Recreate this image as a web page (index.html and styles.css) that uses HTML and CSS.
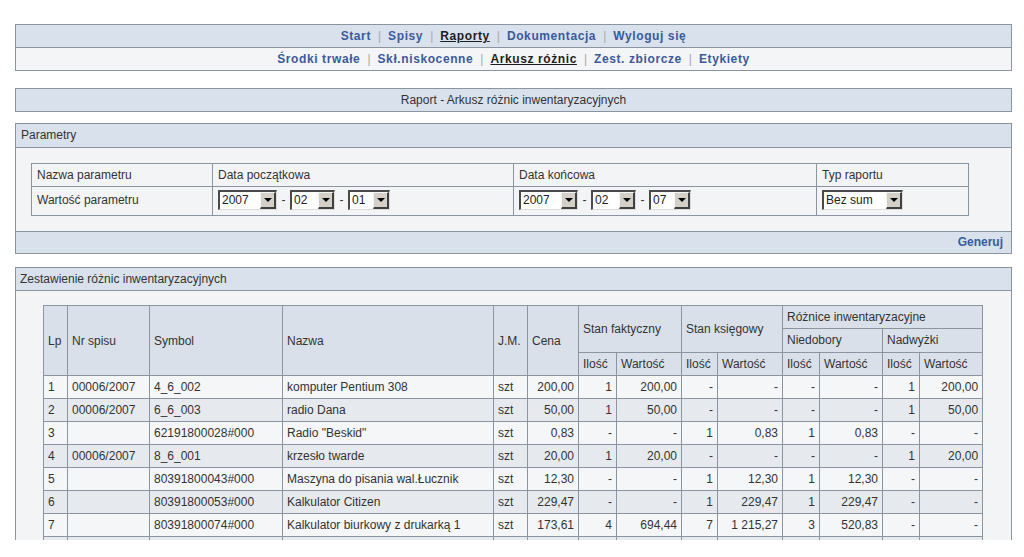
FILE: index.html
```html
<!DOCTYPE html>
<html lang="pl">
<head>
<meta charset="utf-8">
<title>Raport - Arkusz różnic inwentaryzacyjnych</title>
<link rel="stylesheet" href="styles.css">
</head>
<body>
<div class="page">
  <div class="nav">
    <div class="nav-row nav-main">
      <a class="nl" href="#">Start</a><span class="sep">|</span><a class="nl" href="#">Spisy</a><span class="sep">|</span><a class="nl active" href="#">Raporty</a><span class="sep">|</span><a class="nl" href="#">Dokumentacja</a><span class="sep">|</span><a class="nl" href="#">Wyloguj się</a>
    </div>
    <div class="nav-row nav-sub">
      <a class="nl" href="#">Środki trwałe</a><span class="sep">|</span><a class="nl" href="#">Skł.niskocenne</a><span class="sep">|</span><a class="nl active" href="#">Arkusz różnic</a><span class="sep">|</span><a class="nl" href="#">Zest. zbiorcze</a><span class="sep">|</span><a class="nl" href="#">Etykiety</a>
    </div>
  </div>

  <div class="titlebar">Raport - Arkusz różnic inwentaryzacyjnych</div>

  <div class="panel params">
    <div class="panel-head">Parametry</div>
    <div class="panel-body params-body">
      <table class="ptable">
        <colgroup><col class="pc1"><col class="pc2"><col class="pc3"><col class="pc4"></colgroup>
        <tr><td>Nazwa parametru</td><td>Data początkowa</td><td>Data końcowa</td><td>Typ raportu</td></tr>
        <tr class="prow">
          <td>Wartość parametru</td>
          <td><div class="dates"><span class="sel w-year"><span class="sv">2007</span><span class="sb"></span></span><span class="dash">-</span><span class="sel w-mon"><span class="sv">02</span><span class="sb"></span></span><span class="dash">-</span><span class="sel w-day"><span class="sv">01</span><span class="sb"></span></span></div></td>
          <td><div class="dates"><span class="sel w-year"><span class="sv">2007</span><span class="sb"></span></span><span class="dash">-</span><span class="sel w-mon"><span class="sv">02</span><span class="sb"></span></span><span class="dash">-</span><span class="sel w-day"><span class="sv">07</span><span class="sb"></span></span></div></td>
          <td><div class="dates"><span class="sel w-typ"><span class="sv">Bez sum</span><span class="sb"></span></span></div></td>
        </tr>
      </table>
    </div>
    <div class="panel-foot"><a class="nl" href="#">Generuj</a></div>
  </div>

  <div class="panel result">
    <div class="panel-head">Zestawienie różnic inwentaryzacyjnych</div>
    <div class="panel-body result-body">
      <table class="dtable">
        <colgroup>
          <col class="c-lp"><col class="c-nr"><col class="c-sym"><col class="c-naz"><col class="c-jm"><col class="c-cena">
          <col class="c-q1"><col class="c-v1"><col class="c-q2"><col class="c-v2"><col class="c-q3"><col class="c-v3"><col class="c-q4"><col class="c-v4">
        </colgroup>
        <thead>
          <tr>
            <th rowspan="3">Lp</th><th rowspan="3">Nr spisu</th><th rowspan="3">Symbol</th><th rowspan="3">Nazwa</th><th rowspan="3">J.M.</th><th rowspan="3">Cena</th>
            <th colspan="2" rowspan="2">Stan faktyczny</th><th colspan="2" rowspan="2">Stan księgowy</th><th colspan="4">Różnice inwentaryzacyjne</th>
          </tr>
          <tr class="h2"><th colspan="2">Niedobory</th><th colspan="2">Nadwyżki</th></tr>
          <tr><th>Ilość</th><th>Wartość</th><th>Ilość</th><th>Wartość</th><th>Ilość</th><th>Wartość</th><th>Ilość</th><th>Wartość</th></tr>
        </thead>
        <tbody>
          <tr><td>1</td><td>00006/2007</td><td>4_6_002</td><td>komputer Pentium 308</td><td>szt</td><td class="n">200,00</td><td class="n">1</td><td class="n">200,00</td><td class="n">-</td><td class="n">-</td><td class="n">-</td><td class="n">-</td><td class="n">1</td><td class="n">200,00</td></tr>
          <tr><td>2</td><td>00006/2007</td><td>6_6_003</td><td>radio Dana</td><td>szt</td><td class="n">50,00</td><td class="n">1</td><td class="n">50,00</td><td class="n">-</td><td class="n">-</td><td class="n">-</td><td class="n">-</td><td class="n">1</td><td class="n">50,00</td></tr>
          <tr><td>3</td><td></td><td>62191800028#000</td><td>Radio "Beskid"</td><td>szt</td><td class="n">0,83</td><td class="n">-</td><td class="n">-</td><td class="n">1</td><td class="n">0,83</td><td class="n">1</td><td class="n">0,83</td><td class="n">-</td><td class="n">-</td></tr>
          <tr><td>4</td><td>00006/2007</td><td>8_6_001</td><td>krzesło twarde</td><td>szt</td><td class="n">20,00</td><td class="n">1</td><td class="n">20,00</td><td class="n">-</td><td class="n">-</td><td class="n">-</td><td class="n">-</td><td class="n">1</td><td class="n">20,00</td></tr>
          <tr><td>5</td><td></td><td>80391800043#000</td><td>Maszyna do pisania wal.Łucznik</td><td>szt</td><td class="n">12,30</td><td class="n">-</td><td class="n">-</td><td class="n">1</td><td class="n">12,30</td><td class="n">1</td><td class="n">12,30</td><td class="n">-</td><td class="n">-</td></tr>
          <tr><td>6</td><td></td><td>80391800053#000</td><td>Kalkulator Citizen</td><td>szt</td><td class="n">229,47</td><td class="n">-</td><td class="n">-</td><td class="n">1</td><td class="n">229,47</td><td class="n">1</td><td class="n">229,47</td><td class="n">-</td><td class="n">-</td></tr>
          <tr><td>7</td><td></td><td>80391800074#000</td><td>Kalkulator biurkowy z drukarką 1</td><td>szt</td><td class="n">173,61</td><td class="n">4</td><td class="n">694,44</td><td class="n">7</td><td class="n">1 215,27</td><td class="n">3</td><td class="n">520,83</td><td class="n">-</td><td class="n">-</td></tr>
          <tr class="empty"><td></td><td></td><td></td><td></td><td></td><td></td><td></td><td></td><td></td><td></td><td></td><td></td><td></td><td></td></tr>
        </tbody>
      </table>
    </div>
  </div>
</div>
</body>
</html>
```

FILE: styles.css
```css
html, body {
  margin: 0;
  padding: 0;
  background: #ffffff;
}

body {
  font-family: "Liberation Sans", Arial, sans-serif;
  font-size: 12px;
  color: #333333;
}

.page {
  height: 540px;
  overflow: hidden;
  padding: 24px 12px 0 15px;
  box-sizing: border-box;
}

a { text-decoration: none; }

.nl {
  color: #3a5a9c;
  font-weight: bold;
}

.nav .nl {
  letter-spacing: 0.6px;
}

.nl.active {
  color: #1e1e1e;
  text-decoration: underline;
}

.sep {
  color: #a8a8a8;
  padding: 0 7px;
}

/* top navigation */
.nav {
  border: 1px solid #8a95a1;
}

.nav-row {
  height: 22px;
  line-height: 22px;
  text-align: center;
}

.nav-main {
  background: #d9e1ec;
  border-bottom: 1px solid #8a95a1;
}

.nav-sub {
  background: #f4f5f7;
}

.titlebar {
  margin-top: 17px;
  border: 1px solid #8a95a1;
  background: #d9e1ec;
  height: 22px;
  line-height: 22px;
  text-align: center;
}

/* panels */
.panel {
  border: 1px solid #8a95a1;
  background: #f3f4f6;
}

.params { margin-top: 11px; }
.result { margin-top: 13px; }

.panel-head {
  background: #d9e1ec;
  border-bottom: 1px solid #8a95a1;
  height: 23px;
  line-height: 23px;
  padding-left: 5px;
}

.result .panel-head {
  height: 22px;
  line-height: 22px;
  padding-left: 4px;
}

.params-body {
  padding: 15px;
}

.panel-foot {
  background: #d9e1ec;
  border-top: 1px solid #8a95a1;
  height: 21px;
  line-height: 21px;
  text-align: right;
  padding-right: 8px;
}

/* parameter table */
.ptable {
  border-collapse: collapse;
  table-layout: fixed;
  width: 937px;
}

.pc1 { width: 181px; }
.pc2 { width: 301px; }
.pc3 { width: 303px; }
.pc4 { width: 152px; }

.ptable td {
  border: 1px solid #8a95a1;
  padding: 4px 5px;
  line-height: 14px;
  vertical-align: middle;
  white-space: nowrap;
}

.ptable .prow td {
  padding: 3px 5px 5px 5px;
}

.dates {
  display: flex;
  align-items: center;
}

.dash {
  width: 13px;
  text-align: center;
  line-height: 20px;
}

/* imitation of classic select boxes */
.sel {
  display: inline-flex;
  height: 20px;
  box-sizing: border-box;
  background: #ffffff;
  border-style: solid;
  border-width: 2px 1px 1px 2px;
  border-color: #4a4a4a #dcdcdc #dcdcdc #4a4a4a;
}

.sv {
  flex: 1;
  padding-left: 2px;
  line-height: 17px;
  color: #222222;
  white-space: nowrap;
}

.sb {
  width: 16px;
  box-sizing: border-box;
  background: #d4d0c8;
  border-style: solid;
  border-width: 1px 2px 2px 1px;
  border-color: #f4f4f4 #404040 #404040 #f4f4f4;
  display: flex;
  align-items: center;
  justify-content: center;
}

.sb::after {
  content: "";
  display: block;
  width: 0;
  height: 0;
  border-left: 4px solid transparent;
  border-right: 4px solid transparent;
  border-top: 4px solid #000000;
}

.w-year { width: 59px; }
.w-mon { width: 45px; }
.w-day { width: 42px; }
.w-typ { width: 81px; }

/* result table */
.result-body {
  padding: 14px 0 0 27px;
}

.dtable {
  border-collapse: collapse;
  table-layout: fixed;
  width: 939px;
}

.c-lp { width: 24px; }
.c-nr { width: 82px; }
.c-sym { width: 133px; }
.c-naz { width: 211px; }
.c-jm { width: 34px; }
.c-cena { width: 51px; }
.c-q1 { width: 38px; }
.c-v1 { width: 65px; }
.c-q2 { width: 36px; }
.c-v2 { width: 65px; }
.c-q3 { width: 37px; }
.c-v3 { width: 63px; }
.c-q4 { width: 37px; }
.c-v4 { width: 63px; }

.dtable th,
.dtable td {
  border: 1px solid #8a95a1;
  padding: 4px 4px;
  line-height: 14px;
  white-space: nowrap;
  overflow: hidden;
}

.dtable th {
  background: #d9e0ea;
  font-weight: normal;
  text-align: left;
  vertical-align: middle;
}

.dtable .h2 th {
  padding-top: 4px;
  padding-bottom: 5px;
}

.dtable td {
  background: #f4f6f8;
  text-align: left;
}

.dtable tbody tr:nth-child(even) td {
  background: #e6eaee;
}

.dtable tr.empty td {
  height: 14px;
}

.dtable td.n {
  text-align: right;
}
```
